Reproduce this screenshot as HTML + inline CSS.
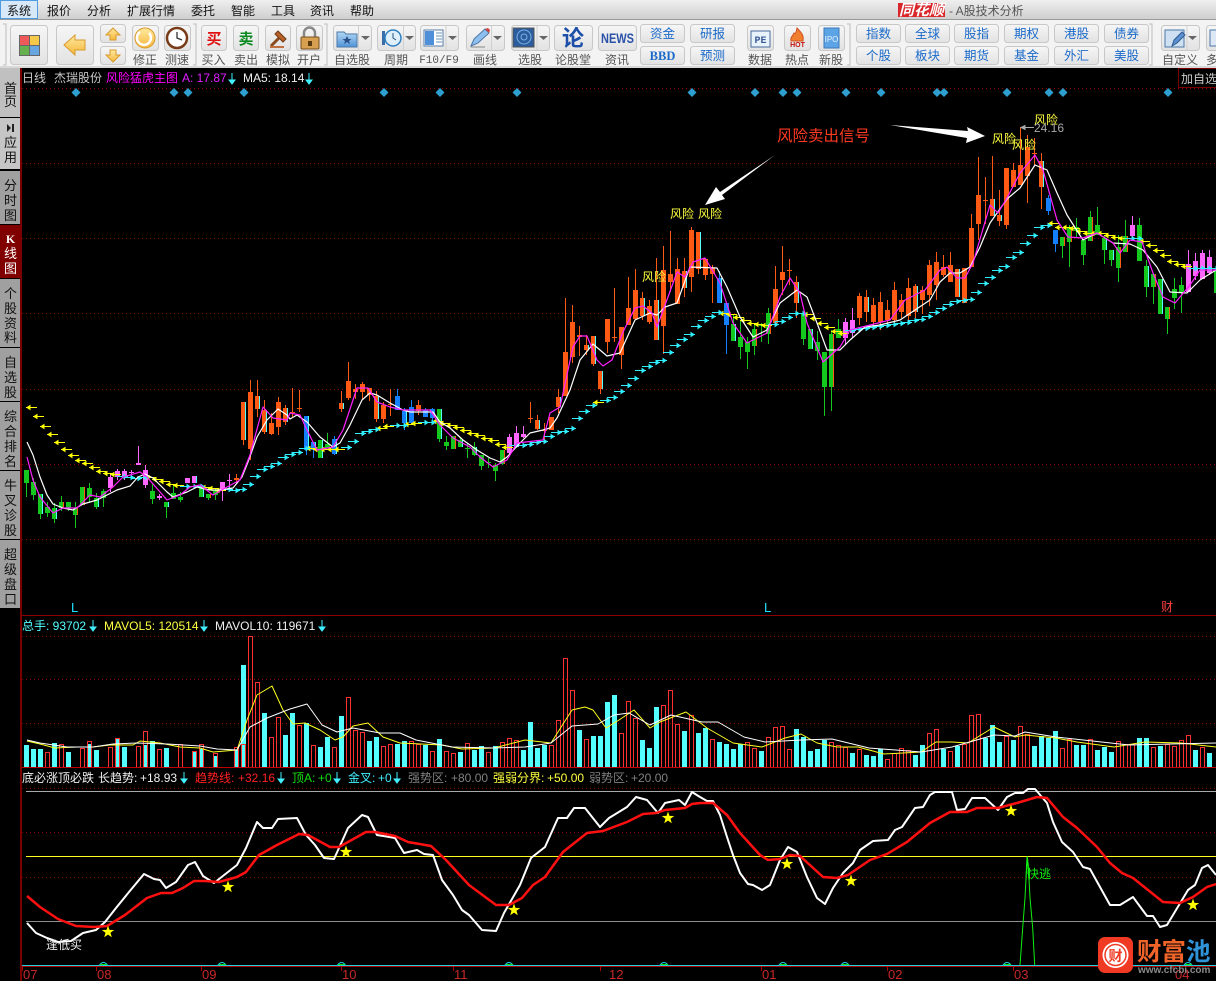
<!DOCTYPE html>
<html><head><meta charset="utf-8"><title>同花顺</title>
<style>
html,body{margin:0;padding:0;background:#000;width:1216px;height:981px;overflow:hidden}
svg{display:block}
text{font-family:"Liberation Sans","WenQuanYi Zen Hei","Noto Sans CJK SC",sans-serif;font-size:12px}
.m{fill:#111}
.l{fill:#555;text-anchor:middle}
.t{fill:#1b6ac9;text-anchor:middle;font-size:12.5px}
.btn{fill:url(#gb);stroke:#c8c8c8;stroke-width:1}
.s{fill:#111;text-anchor:middle;font-size:13px}
.dot{stroke:#8a0000;stroke-width:1;stroke-dasharray:1 3;shape-rendering:crispEdges;fill:none}
.c{fill:none;shape-rendering:crispEdges}
.ln{fill:none;stroke-linejoin:round}
</style></head><body>
<svg xmlns="http://www.w3.org/2000/svg" width="1216" height="981" viewBox="0 0 1216 981">
<defs>
<linearGradient id="gm" x1="0" y1="0" x2="0" y2="1"><stop offset="0" stop-color="#efefef"/><stop offset="1" stop-color="#cfcfcf"/></linearGradient>
<linearGradient id="gb" x1="0" y1="0" x2="0" y2="1"><stop offset="0" stop-color="#f6f6f6"/><stop offset="1" stop-color="#e2e2e2"/></linearGradient>
<linearGradient id="gy" x1="0" y1="0" x2="0" y2="1"><stop offset="0" stop-color="#ffe9a0"/><stop offset="1" stop-color="#f5b73c"/></linearGradient>
<linearGradient id="gf" x1="0" y1="0" x2="0" y2="1"><stop offset="0" stop-color="#b5d8f5"/><stop offset="1" stop-color="#4f93d6"/></linearGradient>
<path id="st" d="M0-6.500L1.500-2.100 6.200-2 2.500.8 3.800 5.300 0 2.600-3.800 5.300-2.500.8-6.200-2-1.500-2.100z" fill="#ff0"/>
<path id="di" d="M0-4.500L4.500 0 0 4.500-4.500 0z" fill="#2f9fd0"/>
<path id="bp" d="M-4 0q4-5 8 0" fill="none" stroke="#20d0e0"/>
</defs>
<rect width="1216" height="981" fill="#000"/>
<!-- menu -->
<rect width="1216" height="19" fill="url(#gm)"/>
<rect y="19" width="1216" height="1" fill="#9a9a9a"/>
<rect y="20" width="1216" height="48" fill="#f3f3f3"/>
<rect y="66" width="1216" height="2" fill="#d8d8d8"/>
<rect x=".5" y=".5" width="37" height="18" fill="#d7e8f8" stroke="#4d9be0"/>
<text class="m" x="7" y="15">系统</text><text class="m" x="47" y="15">报价</text><text class="m" x="87" y="15">分析</text><text class="m" x="127" y="15">扩展行情</text><text class="m" x="191" y="15">委托</text><text class="m" x="231" y="15">智能</text><text class="m" x="271" y="15">工具</text><text class="m" x="310" y="15">资讯</text><text class="m" x="350" y="15">帮助</text>
<rect x="898" y="3" width="47" height="14" fill="#d8262a"/>
<text x="899" y="15" font-weight="bold" font-style="italic" fill="#fff" style="font-size:15px">同花顺</text>
<text x="949" y="15" fill="#555">- A股技术分析</text>
<!-- grips -->
<path d="M3 24h3v41H3M193 24h3v41h-3M324 24h3v41h-3M847 24h3v41h-3M1149 24h3v41h-3" fill="none" stroke="#bcbcbc"/>
<!-- buttons -->
<rect class="btn" x="10.500" y="25.500" width="37" height="39" rx="3"/>
<rect x="19" y="35" width="21" height="21" fill="#666"/><rect x="20" y="36" width="9" height="9" fill="#f0595a"/><rect x="30" y="36" width="9" height="9" fill="#f4c94a"/><rect x="20" y="46" width="9" height="9" fill="#66b050"/><rect x="30" y="46" width="9" height="9" fill="#68a6e2"/>
<rect class="btn" x="56.500" y="25.500" width="37" height="39" rx="3"/>
<path d="M64 45l11-10v5h10v10H75v5z" fill="url(#gy)" stroke="#d89a2c"/>
<rect class="btn" x="100.500" y="24.500" width="25" height="18" rx="3"/><path d="M113 28l7 7h-4v5h-6v-5h-4z" fill="url(#gy)" stroke="#d89a2c"/>
<rect class="btn" x="100.500" y="46.500" width="25" height="18" rx="3"/><path d="M113 62l-7-7h4v-5h6v5h4z" fill="url(#gy)" stroke="#d89a2c"/>
<rect class="btn" x="132.500" y="25.500" width="26" height="25" rx="3"/><circle cx="145" cy="38" r="10" fill="url(#gy)" stroke="#d89a2c"/><path d="M140 32a7 7 0 1 0 9 1" fill="none" stroke="#fff" stroke-width="2.500"/>
<rect class="btn" x="164.500" y="25.500" width="26" height="25" rx="3"/><circle cx="177" cy="38" r="10" fill="#fff" stroke="#7a3c18" stroke-width="2.500"/><path d="M177 32v6l5 2" fill="none" stroke="#333" stroke-width="1.300"/>
<rect class="btn" x="201.500" y="25.500" width="25" height="25" rx="3"/><text x="214" y="44" text-anchor="middle" fill="#e01010" font-weight="bold" style="font-size:15px">买</text>
<rect class="btn" x="233.500" y="25.500" width="25" height="25" rx="3"/><text x="246" y="44" text-anchor="middle" fill="#0a8a20" font-weight="bold" style="font-size:15px">卖</text>
<rect class="btn" x="265.500" y="25.500" width="25" height="25" rx="3"/><path d="M278 31l8 8-3 3-8-8z" fill="#b8622a" stroke="#6e3a14"/><path d="M279 38l-8 8" stroke="#8a4a20" stroke-width="3"/><rect x="270" y="46" width="14" height="2" fill="#c07040"/>
<rect class="btn" x="296.500" y="25.500" width="26" height="25" rx="3"/><path d="M304 38v-5a5.500 5.500 0 0 1 11 0v5" fill="none" stroke="#888" stroke-width="2.500"/><rect x="301" y="37" width="18" height="12" rx="1" fill="#d6a050" stroke="#7a5020"/><rect x="308" y="41" width="4" height="5" fill="#5a3a10"/>
<rect class="btn" x="333.500" y="25.500" width="38" height="25" rx="3"/><path d="M358.500 26v24" stroke="#d0d0d0"/><path d="M337 32h7l2 2h11v13h-20z" fill="url(#gf)" stroke="#4a78a8"/><path d="M347 36l1.500 3h3l-2.500 2 1 3-3-2-3 2 1-3-2.500-2h3z" fill="#2a4f86"/><path d="M361 36h9l-4.500 4z" fill="#666"/>
<rect class="btn" x="377.500" y="25.500" width="38" height="25" rx="3"/><path d="M403.500 26v24" stroke="#d0d0d0"/><rect x="382" y="31" width="3" height="14" fill="#3a6ea8"/><circle cx="393" cy="38" r="8" fill="#dff0fb" stroke="#2e7fc2" stroke-width="1.500"/><path d="M393 33v5l3 2" fill="none" stroke="#2a4f86"/><path d="M405 36h9l-4.500 4z" fill="#666"/>
<rect class="btn" x="420.500" y="25.500" width="38" height="25" rx="3"/><path d="M446 26v24" stroke="#d0d0d0"/><rect x="424" y="30" width="19" height="16" fill="#fff" stroke="#5a7ea8"/><rect x="425" y="31" width="9" height="14" fill="#4d8fd8"/><path d="M436 33h6M436 36h6M436 39h6M436 42h6" stroke="#6a90b8"/><path d="M448 36h9l-4.500 4z" fill="#666"/>
<rect class="btn" x="466.500" y="25.500" width="38" height="25" rx="3"/><path d="M491.500 26v24" stroke="#d0d0d0"/><path d="M471 46l3-7 11-10 4 4-11 10z" fill="#8ec0ef" stroke="#4a78a8"/><path d="M485 29l4 4 1-3-2-2z" fill="#d04040"/><path d="M471 47h14" stroke="#888"/><path d="M493 36h9l-4.500 4z" fill="#666"/>
<rect class="btn" x="511.500" y="25.500" width="38" height="25" rx="3"/><path d="M537 26v24" stroke="#d0d0d0"/><rect x="513" y="28" width="21" height="19" fill="#2b5c9c" stroke="#555"/><circle cx="524" cy="37" r="7" fill="none" stroke="#7bb0e8"/><circle cx="524" cy="37" r="3" fill="none" stroke="#7bb0e8"/><path d="M539 36h9l-4.500 4z" fill="#666"/>
<rect class="btn" x="554.500" y="25.500" width="38" height="25" rx="3"/><text x="573" y="46" text-anchor="middle" fill="#1d4fa8" font-weight="bold" style="font-size:22px">论</text>
<rect class="btn" x="598.500" y="25.500" width="38" height="25" rx="3"/><text x="601" y="43" fill="#2a52a8" font-weight="bold" textLength="33" lengthAdjust="spacingAndGlyphs" style="font-size:14px">NEWS</text>
<rect class="btn" x="640.500" y="24.500" width="44" height="18" rx="3"/><text class="t" x="662.500" y="38">资金</text>
<rect class="btn" x="640.500" y="46.500" width="44" height="18" rx="3"/><text class="t" x="662.500" y="60" style="font-family:'Liberation Serif',serif;font-weight:bold">BBD</text>
<rect class="btn" x="690.500" y="24.500" width="44" height="18" rx="3"/><text class="t" x="712.500" y="38">研报</text>
<rect class="btn" x="690.500" y="46.500" width="44" height="18" rx="3"/><text class="t" x="712.500" y="60">预测</text>
<rect class="btn" x="747.500" y="25.500" width="26" height="25" rx="3"/><rect x="751" y="31" width="19" height="16" fill="#e8f2fb" stroke="#4a6a9a"/><text x="760.500" y="43" text-anchor="middle" fill="#3a5a9a" font-weight="bold" style="font-size:10px;font-family:'Liberation Mono',monospace">PE</text>
<rect class="btn" x="784.500" y="25.500" width="26" height="25" rx="3"/><path d="M797 28c5 5 7 8 6 13h-12c-1-4 2-5 3-8 1 1 2 1 3-5z" fill="#f08030" stroke="#d05020"/><text x="797.500" y="47" text-anchor="middle" fill="#c01010" font-weight="bold" style="font-size:7px">HOT</text>
<rect class="btn" x="818.500" y="25.500" width="26" height="25" rx="3"/><rect x="824" y="28" width="15" height="20" fill="#5da4e6" stroke="#3a78b8"/><text x="831.500" y="42" text-anchor="middle" fill="#e8f4ff" style="font-size:8px">IPO</text>
<rect class="btn" x="856.500" y="24.500" width="44" height="18" rx="3"/><text class="t" x="878.500" y="38">指数</text><rect class="btn" x="856.500" y="46.500" width="44" height="18" rx="3"/><text class="t" x="878.500" y="60">个股</text>
<rect class="btn" x="905.500" y="24.500" width="44" height="18" rx="3"/><text class="t" x="927.500" y="38">全球</text><rect class="btn" x="905.500" y="46.500" width="44" height="18" rx="3"/><text class="t" x="927.500" y="60">板块</text>
<rect class="btn" x="954.500" y="24.500" width="44" height="18" rx="3"/><text class="t" x="976.500" y="38">股指</text><rect class="btn" x="954.500" y="46.500" width="44" height="18" rx="3"/><text class="t" x="976.500" y="60">期货</text>
<rect class="btn" x="1004.500" y="24.500" width="44" height="18" rx="3"/><text class="t" x="1026.500" y="38">期权</text><rect class="btn" x="1004.500" y="46.500" width="44" height="18" rx="3"/><text class="t" x="1026.500" y="60">基金</text>
<rect class="btn" x="1054.500" y="24.500" width="44" height="18" rx="3"/><text class="t" x="1076.500" y="38">港股</text><rect class="btn" x="1054.500" y="46.500" width="44" height="18" rx="3"/><text class="t" x="1076.500" y="60">外汇</text>
<rect class="btn" x="1104.500" y="24.500" width="44" height="18" rx="3"/><text class="t" x="1126.500" y="38">债券</text><rect class="btn" x="1104.500" y="46.500" width="44" height="18" rx="3"/><text class="t" x="1126.500" y="60">美股</text>
<rect class="btn" x="1161.500" y="25.500" width="38" height="25" rx="3"/><path d="M1187 26v24" stroke="#d0d0d0"/><rect x="1165" y="30" width="19" height="17" fill="#cfe0f2" stroke="#4a78a8"/><path d="M1172 46l2-6 8-8 3 3-8 8z" fill="#5a90d0" stroke="#305a90"/><path d="M1188 36h9l-4.500 4z" fill="#666"/>
<rect class="btn" x="1206.500" y="25.500" width="26" height="25" rx="3"/><rect x="1210" y="30" width="14" height="16" fill="#dde8f4" stroke="#4a78a8"/>
<text class="l" x="145" y="64">修正</text><text class="l" x="177" y="64">测速</text><text class="l" x="213.500" y="64">买入</text><text class="l" x="246" y="64">卖出</text><text class="l" x="278" y="64">模拟</text><text class="l" x="309" y="64">开户</text><text class="l" x="352" y="64">自选股</text><text class="l" x="396" y="64">周期</text><text class="l" x="439" y="63" style="font-size:11px;font-family:'Liberation Mono',monospace">F10/F9</text><text class="l" x="485" y="64">画线</text><text class="l" x="530" y="64">选股</text><text class="l" x="573" y="64">论股堂</text><text class="l" x="617" y="64">资讯</text><text class="l" x="760" y="64">数据</text><text class="l" x="797" y="64">热点</text><text class="l" x="831" y="64">新股</text><text class="l" x="1180" y="64">自定义</text><text class="l" x="1212" y="64">多</text>
<!-- sidebar -->
<rect x="0" y="68" width="20" height="49" fill="#c0c0c0"/><rect x="0" y="118" width="20" height="51" fill="#c6c6c6"/>
<rect x="0" y="171" width="20" height="53" fill="#a0a0a0"/><rect x="0" y="225" width="20" height="53" fill="#800000"/>
<rect x="0" y="279" width="20" height="68" fill="#a0a0a0"/><rect x="0" y="348" width="20" height="53" fill="#a0a0a0"/>
<rect x="0" y="402" width="20" height="68" fill="#a0a0a0"/><rect x="0" y="471" width="20" height="68" fill="#a0a0a0"/><rect x="0" y="540" width="20" height="68" fill="#a0a0a0"/>
<rect x="20" y="68" width="2" height="913" fill="#7a0000"/>
<text class="s" x="10.500" y="93">首</text><text class="s" x="10.500" y="106">页</text><path d="M7 124l4 4-4 4zM12 124h2v8h-2z" fill="#222"/><text class="s" x="10.500" y="147">应</text><text class="s" x="10.500" y="162">用</text><text class="s" x="10.500" y="190">分</text><text class="s" x="10.500" y="205">时</text><text class="s" x="10.500" y="220">图</text><text x="10.500" y="243" text-anchor="middle" fill="#fff" font-weight="bold" style="font-family:'Liberation Serif',serif;font-size:12px">K</text><text class="s" style="fill:#fff" x="10.500" y="258">线</text><text class="s" style="fill:#fff" x="10.500" y="273">图</text><text class="s" x="10.500" y="298">个</text><text class="s" x="10.500" y="313">股</text><text class="s" x="10.500" y="328">资</text><text class="s" x="10.500" y="342">料</text><text class="s" x="10.500" y="367">自</text><text class="s" x="10.500" y="382">选</text><text class="s" x="10.500" y="397">股</text><text class="s" x="10.500" y="421">综</text><text class="s" x="10.500" y="436">合</text><text class="s" x="10.500" y="451">排</text><text class="s" x="10.500" y="466">名</text><text class="s" x="10.500" y="490">牛</text><text class="s" x="10.500" y="505">叉</text><text class="s" x="10.500" y="520">诊</text><text class="s" x="10.500" y="535">股</text><text class="s" x="10.500" y="559">超</text><text class="s" x="10.500" y="574">级</text><text class="s" x="10.500" y="589">盘</text><text class="s" x="10.500" y="604">口</text>
<!-- grid -->
<path class="dot" d="M22 88.500H1216M22 163.500H1216M22 238.500H1216M22 313.500H1216M22 389.500H1216M22 464.500H1216M22 539.500H1216M22 636.500H1216M22 679.500H1216M22 723.500H1216M22 788.500H1216M22 832.500H1216M22 877.500H1216"/>
<rect x="22" y="615" width="1194" height="1" fill="#8a0000"/><rect x="22" y="767" width="1194" height="1" fill="#c00000"/>
<!-- diamonds -->
<use href="#di" x="76" y="92.500"/><use href="#di" x="174" y="92.500"/><use href="#di" x="188" y="92.500"/><use href="#di" x="244" y="92.500"/><use href="#di" x="384" y="92.500"/><use href="#di" x="440" y="92.500"/><use href="#di" x="517" y="92.500"/><use href="#di" x="692" y="92.500"/><use href="#di" x="755" y="92.500"/><use href="#di" x="783" y="92.500"/><use href="#di" x="797" y="92.500"/><use href="#di" x="846" y="92.500"/><use href="#di" x="881" y="92.500"/><use href="#di" x="937" y="92.500"/><use href="#di" x="944" y="92.500"/><use href="#di" x="1007" y="92.500"/><use href="#di" x="1049" y="92.500"/><use href="#di" x="1063" y="92.500"/><use href="#di" x="1168" y="92.500"/>
<!-- candles: green -->
<path class="c" stroke="#14c81e" d="M26.500 470V497M33.500 478V500M40.500 494V519M47.500 502V517M54.500 503V523M61.500 496V511M68.500 502V511M75.500 502V528M82.500 487V505M89.500 483V503M96.500 493V509M103.500 489V507M152.500 484V504M166.500 502V518M173.500 486V499M180.500 492V502M201.500 486V497M208.500 494V500M215.500 488V500M320.500 440V458M327.500 433V448M439.500 409V442M446.500 436V450M453.500 436V449M460.500 438V447M467.500 443V458M474.500 442V456M481.500 455V470M488.500 458V468M495.500 463V481M502.500 450V465M733.500 315V341M740.500 320V359M747.500 337V369M754.500 325V355M761.500 323V342M768.500 308V344M803.500 313V345M810.500 329V349M817.500 331V360M824.500 352V416M831.500 330V411M838.500 319V338M1062.500 237V258M1069.500 225V267M1076.500 218V238M1083.500 240V265M1090.500 211V241M1097.500 207V235M1104.500 235V264M1111.500 250V266M1118.500 235V282M1125.500 220V252M1139.500 218V261M1146.500 260V297M1153.500 274V304M1160.500 279V314M1167.500 307V334M1174.500 278V309M1181.500 277V313"/>
<path class="c" stroke="#14c81e" stroke-width="5" d="M26.500 470V483M33.500 482V495M40.500 494V514M47.500 507V513M54.500 508V519M61.500 502V508M68.500 502V508M75.500 508V515M82.500 487V505M89.500 488V497M96.500 498V507M103.500 491V498M152.500 491V499M166.500 502V507M173.500 493V499M180.500 497V500M201.500 488V497M208.500 494V498M215.500 490V495M320.500 440V458M327.500 444V448M439.500 409V439M446.500 442V446M453.500 436V449M460.500 440V447M467.500 448V449M474.500 447V455M481.500 455V466M488.500 462V463M495.500 465V471M502.500 450V464M733.500 324V341M740.500 337V347M747.500 342V352M754.500 329V346M761.500 325V326M768.500 313V334M803.500 313V339M810.500 329V349M817.500 342V351M824.500 352V387M831.500 334V387M838.500 329V338M1062.500 237V246M1069.500 227V242M1076.500 227V231M1083.500 240V255M1090.500 217V241M1097.500 225V235M1104.500 238V250M1111.500 250V260M1118.500 247V268M1125.500 236V252M1139.500 225V261M1146.500 266V287M1153.500 274V287M1160.500 279V314M1167.500 307V319M1174.500 289V298M1181.500 285V292M1216.500 270V293"/>
<!-- orange -->
<path class="c" stroke="#ff5a14" d="M236.500 474V484M243.500 402V445M250.500 380V460M257.500 380V417M264.500 400V434M271.500 413V435M278.500 397V435M285.500 405V425M292.500 388V417M299.500 390V412M341.500 391V412M348.500 362V400M355.500 384V399M362.500 382V400M369.500 388V401M376.500 391V422M383.500 402V423M390.500 389V416M418.500 400V415M530.500 402V423M537.500 415V430M544.500 423V440M551.500 417V430M558.500 389V413M565.500 298V396M572.500 305V363M579.500 326V356M586.500 335V355M593.500 336V366M600.500 371V394M607.500 319V353M614.500 288V342M621.500 327V369M628.500 277V325M635.500 269V320M642.500 292V320M649.500 300V324M656.500 258V340M663.500 246V354M670.500 231V292M677.500 258V304M684.500 258V297M691.500 227V292M698.500 232V274M705.500 259V280M712.500 265V303M775.500 266V323M782.500 246V295M789.500 259V285M796.500 276V318M859.500 293V325M866.500 290V322M873.500 298V328M880.500 292V330M887.500 300V326M894.500 282V324M901.500 294V318M908.500 278V320M915.500 284V318M922.500 286V314M929.500 260V306M936.500 252V300M943.500 255V277M950.500 252V282M957.500 269V297M964.500 268V303M971.500 214V267M978.500 157V240M985.500 177V224M992.500 156V216M999.500 190V226M1006.500 168V229M1013.500 163V187M1020.500 127V185M1027.500 135V203M1034.500 138V165M1041.500 153V209"/>
<path class="c" stroke="#ff5a14" stroke-width="5" d="M236.500 478V480M243.500 402V440M250.500 392V449M257.500 396V409M264.500 410V432M271.500 423V434M278.500 402V427M285.500 408V422M292.500 412V413M299.500 408V409M341.500 403V409M348.500 381V398M355.500 389V392M362.500 384V392M369.500 388V395M376.500 396V419M383.500 405V419M390.500 404V405M418.500 405V411M530.500 418V419M537.500 420V429M544.500 430V431M551.500 417V430M558.500 397V407M565.500 352V396M572.500 322V357M579.500 335V337M586.500 345V350M593.500 336V364M600.500 371V389M607.500 319V342M614.500 337V338M621.500 327V355M628.500 308V325M635.500 290V319M642.500 298V316M649.500 306V322M656.500 300V340M663.500 270V326M670.500 274V282M677.500 269V304M684.500 271V288M691.500 230V277M698.500 232V269M705.500 259V275M712.500 268V274M775.500 289V323M782.500 272V280M789.500 270V271M796.500 282V303M859.500 296V318M866.500 297V312M873.500 305V322M880.500 302V322M887.500 310V320M894.500 290V320M901.500 300V312M908.500 288V316M915.500 286V312M922.500 290V300M929.500 265V295M936.500 262V285M943.500 267V275M950.500 265V282M957.500 269V297M964.500 268V303M971.500 228V267M978.500 195V224M985.500 200V201M992.500 199V216M999.500 215V221M1006.500 168V225M1013.500 170V187M1020.500 165V185M1027.500 147V176M1034.500 153V154M1041.500 161V187"/>
<!-- pink -->
<path class="c" stroke="#ff66ff" d="M110.500 473V492M117.500 469V480M124.500 469V480M131.500 470V478M138.500 446V465M145.500 465V488M159.500 494V500M187.500 478V483M194.500 476V483M222.500 482V501M229.500 474V491M509.500 434V454M516.500 426V447M523.500 426V438M845.500 318V345M852.500 308V338M1132.500 216V240M1188.500 250V292M1195.500 253V280M1202.500 250V279M1209.500 250V275"/>
<path class="c" stroke="#ff66ff" stroke-width="5" d="M110.500 477V488M117.500 471V477M124.500 471V476M131.500 472V473M138.500 463V465M145.500 470V485M159.500 496V498M187.500 478V483M194.500 476V483M222.500 482V491M229.500 480V481M509.500 437V453M516.500 433V447M523.500 434V437M845.500 322V338M852.500 320V333M1132.500 225V236M1188.500 264V292M1195.500 261V276M1202.500 253V279M1209.500 257V273"/>
<!-- blue -->
<path class="c" stroke="#1480ff" d="M306.500 416V455M313.500 442V458M334.500 436V455M397.500 389V410M404.500 408V430M411.500 400V423M425.500 408V417M432.500 408V423M719.500 271V303M726.500 303V354M1048.500 195V215M1055.500 230V252"/>
<path class="c" stroke="#1480ff" stroke-width="5" d="M306.500 416V450M313.500 442V450M334.500 439V454M397.500 396V410M404.500 411V423M411.500 407V423M425.500 410V417M432.500 409V418M719.500 278V303M726.500 303V325M1048.500 198V211M1055.500 230V244"/>
<!-- edges -->
<path class="c" stroke="#54ffff" d="M42.500 494V514M56.500 508V519M98.500 498V507M168.500 502V507M196.500 476V483M203.500 488V497M245.500 402V440M259.500 396V409M266.500 410V432M287.500 408V422M308.500 416V450M315.500 442V450M322.500 440V458M336.500 439V454M343.500 403V409M378.500 396V419M406.500 411V423M441.500 409V439M462.500 440V447M476.500 447V455M539.500 420V429M560.500 397V407M588.500 345V350M595.500 336V364M602.500 371V389M644.500 298V316M658.500 300V340M686.500 271V288M700.500 232V269M721.500 278V303M735.500 324V341M798.500 282V303M812.500 329V349M868.500 297V312M917.500 286V312M959.500 269V297M994.500 199V216M1001.500 215V221M1043.500 161V187M1106.500 238V250M1113.500 250V260M1148.500 266V287M1162.500 279V314"/>
<path class="c" stroke="#ff5a14" d="M63.500 502V508M77.500 508V515M84.500 487V505M210.500 494V498M455.500 436V449M504.500 450V464M756.500 329V346M770.500 313V334M833.500 334V387M1064.500 237V246M1071.500 227V242M1092.500 217V241M1120.500 247V268M1127.500 236V252M1155.500 274V287M1169.500 307V319"/>
<!-- stair arrows yellow -->
<path fill="#ff0" stroke="#ff0" d="M26 407.500h11m-10 0l3-2v4zM33 416.500h11m-10 0l3-2v4zM40 426.500h11m-10 0l3-2v4zM47 434.500h11m-10 0l3-2v4zM54 442.500h11m-10 0l3-2v4zM61 449.500h11m-10 0l3-2v4zM68 455.500h11m-10 0l3-2v4zM75 460.500h11m-10 0l3-2v4zM82 463.500h11m-10 0l3-2v4zM89 467.500h11m-10 0l3-2v4zM96 471.500h11m-10 0l3-2v4zM103 473.500h11m-10 0l3-2v4zM110 474.500h11m-10 0l3-2v4zM145 477.500h11m-10 0l3-2v4zM152 479.500h11m-10 0l3-2v4zM159 481.500h11m-10 0l3-2v4zM166 484.500h11m-10 0l3-2v4zM173 485.500h11m-10 0l3-2v4zM201 487.500h11m-10 0l3-2v4zM208 488.500h11m-10 0l3-2v4zM215 490.500h11m-10 0l3-2v4zM306 448.500h11m-10 0l3-2v4zM313 449.500h11m-10 0l3-2v4zM320 449.500h11m-10 0l3-2v4zM327 449.500h11m-10 0l3-2v4zM334 449.500h11m-10 0l3-2v4zM376 428.500h11m-10 0l3-2v4zM383 426.500h11m-10 0l3-2v4zM404 424.500h11m-10 0l3-2v4zM411 423.500h11m-10 0l3-2v4zM432 421.500h11m-10 0l3-2v4zM439 423.500h11m-10 0l3-2v4zM446 425.500h11m-10 0l3-2v4zM453 427.500h11m-10 0l3-2v4zM460 430.500h11m-10 0l3-2v4zM467 433.500h11m-10 0l3-2v4zM474 435.500h11m-10 0l3-2v4zM481 438.500h11m-10 0l3-2v4zM488 440.500h11m-10 0l3-2v4zM495 444.500h11m-10 0l3-2v4zM502 447.500h11m-10 0l3-2v4zM593 402.500h11m-10 0l3-2v4zM719 313.500h11m-10 0l3-2v4zM726 314.500h11m-10 0l3-2v4zM733 317.500h11m-10 0l3-2v4zM740 320.500h11m-10 0l3-2v4zM747 323.500h11m-10 0l3-2v4zM754 324.500h11m-10 0l3-2v4zM761 325.500h11m-10 0l3-2v4zM803 314.500h11m-10 0l3-2v4zM810 318.500h11m-10 0l3-2v4zM817 323.500h11m-10 0l3-2v4zM824 327.500h11m-10 0l3-2v4zM831 331.500h11m-10 0l3-2v4zM838 333.500h11m-10 0l3-2v4zM1048 223.500h11m-10 0l3-2v4zM1055 227.500h11m-10 0l3-2v4zM1062 227.500h11m-10 0l3-2v4zM1069 228.500h11m-10 0l3-2v4zM1076 231.500h11m-10 0l3-2v4zM1083 233.500h11m-10 0l3-2v4zM1090 233.500h11m-10 0l3-2v4zM1097 233.500h11m-10 0l3-2v4zM1104 235.500h11m-10 0l3-2v4zM1111 237.500h11m-10 0l3-2v4zM1118 238.500h11m-10 0l3-2v4zM1139 241.500h11m-10 0l3-2v4zM1146 245.500h11m-10 0l3-2v4zM1153 250.500h11m-10 0l3-2v4zM1160 255.500h11m-10 0l3-2v4zM1167 261.500h11m-10 0l3-2v4zM1174 264.500h11m-10 0l3-2v4zM1181 266.500h11m-10 0l3-2v4z"/>
<!-- stair arrows cyan -->
<path fill="#30f0ff" stroke="#30f0ff" d="M117 476.500h11m-1 0l-3-2v4zM124 477.500h11m-1 0l-3-2v4zM131 478.500h11m-1 0l-3-2v4zM138 477.500h11m-1 0l-3-2v4zM180 486.500h11m-1 0l-3-2v4zM187 486.500h11m-1 0l-3-2v4zM194 486.500h11m-1 0l-3-2v4zM222 489.500h11m-1 0l-3-2v4zM229 490.500h11m-1 0l-3-2v4zM236 489.500h11m-1 0l-3-2v4zM243 484.500h11m-1 0l-3-2v4zM250 476.500h11m-1 0l-3-2v4zM257 469.500h11m-1 0l-3-2v4zM264 466.500h11m-1 0l-3-2v4zM271 463.500h11m-1 0l-3-2v4zM278 457.500h11m-1 0l-3-2v4zM285 454.500h11m-1 0l-3-2v4zM292 452.500h11m-1 0l-3-2v4zM299 448.500h11m-1 0l-3-2v4zM341 447.500h11m-1 0l-3-2v4zM348 441.500h11m-1 0l-3-2v4zM355 433.500h11m-1 0l-3-2v4zM362 431.500h11m-1 0l-3-2v4zM369 429.500h11m-1 0l-3-2v4zM390 425.500h11m-1 0l-3-2v4zM397 425.500h11m-1 0l-3-2v4zM418 422.500h11m-1 0l-3-2v4zM425 422.500h11m-1 0l-3-2v4zM509 445.500h11m-1 0l-3-2v4zM516 445.500h11m-1 0l-3-2v4zM523 444.500h11m-1 0l-3-2v4zM530 442.500h11m-1 0l-3-2v4zM537 441.500h11m-1 0l-3-2v4zM544 436.500h11m-1 0l-3-2v4zM551 432.500h11m-1 0l-3-2v4zM558 431.500h11m-1 0l-3-2v4zM565 428.500h11m-1 0l-3-2v4zM572 418.500h11m-1 0l-3-2v4zM579 411.500h11m-1 0l-3-2v4zM586 405.500h11m-1 0l-3-2v4zM600 400.500h11m-1 0l-3-2v4zM607 397.500h11m-1 0l-3-2v4zM614 391.500h11m-1 0l-3-2v4zM621 385.500h11m-1 0l-3-2v4zM628 378.500h11m-1 0l-3-2v4zM635 370.500h11m-1 0l-3-2v4zM642 366.500h11m-1 0l-3-2v4zM649 362.500h11m-1 0l-3-2v4zM656 360.500h11m-1 0l-3-2v4zM663 352.500h11m-1 0l-3-2v4zM670 345.500h11m-1 0l-3-2v4zM677 339.500h11m-1 0l-3-2v4zM684 334.500h11m-1 0l-3-2v4zM691 326.500h11m-1 0l-3-2v4zM698 320.500h11m-1 0l-3-2v4zM705 316.500h11m-1 0l-3-2v4zM712 312.500h11m-1 0l-3-2v4zM768 324.500h11m-1 0l-3-2v4zM775 321.500h11m-1 0l-3-2v4zM782 317.500h11m-1 0l-3-2v4zM789 313.500h11m-1 0l-3-2v4zM796 313.500h11m-1 0l-3-2v4zM845 330.500h11m-1 0l-3-2v4zM852 329.500h11m-1 0l-3-2v4zM859 328.500h11m-1 0l-3-2v4zM866 327.500h11m-1 0l-3-2v4zM873 326.500h11m-1 0l-3-2v4zM880 325.500h11m-1 0l-3-2v4zM887 324.500h11m-1 0l-3-2v4zM894 323.500h11m-1 0l-3-2v4zM901 322.500h11m-1 0l-3-2v4zM908 320.500h11m-1 0l-3-2v4zM915 319.500h11m-1 0l-3-2v4zM922 316.500h11m-1 0l-3-2v4zM929 312.500h11m-1 0l-3-2v4zM936 308.500h11m-1 0l-3-2v4zM943 304.500h11m-1 0l-3-2v4zM950 301.500h11m-1 0l-3-2v4zM957 300.500h11m-1 0l-3-2v4zM964 299.500h11m-1 0l-3-2v4zM971 292.500h11m-1 0l-3-2v4zM978 283.500h11m-1 0l-3-2v4zM985 277.500h11m-1 0l-3-2v4zM992 270.500h11m-1 0l-3-2v4zM999 266.500h11m-1 0l-3-2v4zM1006 257.500h11m-1 0l-3-2v4zM1013 252.500h11m-1 0l-3-2v4zM1020 243.500h11m-1 0l-3-2v4zM1027 235.500h11m-1 0l-3-2v4zM1034 227.500h11m-1 0l-3-2v4zM1041 225.500h11m-1 0l-3-2v4zM1125 238.500h11m-1 0l-3-2v4zM1132 238.500h11m-1 0l-3-2v4zM1188 268.500h11m-1 0l-3-2v4zM1195 268.500h11m-1 0l-3-2v4zM1202 268.500h11m-1 0l-3-2v4zM1209 268.500h11m-1 0l-3-2v4z"/>
<!-- MA -->
<polyline class="ln" stroke="#fff" stroke-width="1.200" points="27,442 33,455 40,477 47,495 53,504 63,508 73,510 83,504 97,500 107,495 117,490 130,486 138,477 145,474 153,478 167,492 173,497 187,492 197,487 210,490 220,490 233,488 242,477 248,462 257,437 267,420 278,409 287,415 290,419 297,415 307,422 320,437 333,447 340,443 350,425 362,400 370,393 377,395 390,403 403,410 410,412 433,412 440,422 450,428 463,440 477,450 490,458 500,462 507,457 520,443 530,433 543,430 550,428 557,418 570,390 580,360 593,344 607,356 620,353 635,320 650,313 657,315 665,307 677,303 690,267 717,268 727,287 740,317 753,337 767,330 780,303 797,290 807,297 817,323 827,350 840,350 850,340 865,327 880,325 900,320 915,310 930,300 940,282 950,273 960,273 970,267 980,247 990,223 1007,199 1020,188 1035,165 1047,170 1057,193 1067,215 1083,240 1097,233 1113,243 1130,244 1143,250 1157,267 1170,292 1187,293 1200,280 1216,270"/>
<polyline class="ln" stroke="#ff20ff" stroke-width="1.200" points="27,457 33,480 40,497 53,513 63,508 77,508 90,495 100,497 113,487 123,477 140,472 147,477 167,500 180,495 190,487 200,485 213,495 227,487 240,480 250,455 263,407 273,418 287,420 290,413 300,415 307,430 317,450 333,447 343,430 357,388 368,388 377,402 390,407 403,410 430,410 440,425 453,438 470,447 480,457 493,467 507,460 517,443 543,440 550,413 560,407 573,347 580,336 587,336 597,360 603,366 612,360 623,332 635,308 643,306 652,313 657,327 668,297 677,272 685,277 693,262 705,258 720,283 733,323 747,343 767,333 780,297 790,278 800,293 807,323 823,362 840,347 850,330 870,325 890,320 905,300 925,290 940,270 947,267 957,278 965,278 973,263 990,205 998,213 1007,198 1020,173 1035,155 1043,170 1057,220 1068,237 1083,238 1097,233 1113,243 1120,253 1130,240 1142,242 1153,273 1163,297 1175,303 1190,285 1200,270 1216,270"/>
<!-- volume cyan -->
<path class="c" stroke="#54ffff" stroke-width="5" d="M26.500 745V767M33.500 749V767M40.500 749V767M54.500 743V767M68.500 752V767M89.500 744V767M96.500 750V767M117.500 739V767M124.500 747V767M145.500 745V767M152.500 741V767M166.500 748V767M194.500 752V767M201.500 749V767M215.500 756V767M236.500 750V767M243.500 665V767M264.500 713V767M285.500 735V767M292.500 713V767M306.500 723V767M320.500 747V767M327.500 737V767M341.500 716V767M369.500 741V767M376.500 737V767M397.500 744V767M404.500 741V767M425.500 745V767M439.500 739V767M460.500 752V767M474.500 750V767M481.500 746V767M495.500 746V767M523.500 750V767M530.500 722V767M537.500 748V767M544.500 745V767M579.500 730V767M593.500 736V767M600.500 736V767M607.500 702V767M614.500 695V767M642.500 740V767M649.500 748V767M656.500 707V767M684.500 731V767M698.500 733V767M705.500 728V767M719.500 742V767M726.500 744V767M733.500 749V767M740.500 744V767M761.500 751V767M796.500 729V767M803.500 737V767M810.500 751V767M817.500 749V767M824.500 740V767M852.500 753V767M866.500 755V767M873.500 756V767M880.500 749V767M915.500 755V767M922.500 745V767M943.500 749V767M957.500 746V767M985.500 738V767M992.500 725V767M999.500 742V767M1013.500 740V767M1034.500 746V767M1041.500 736V767M1048.500 738V767M1055.500 731V767M1076.500 745V767M1083.500 745V767M1097.500 750V767M1104.500 747V767M1111.500 752V767M1139.500 738V767M1146.500 738V767M1160.500 746V767M1195.500 750V767M1209.500 753V767"/>
<!-- volume red -->
<path class="c" stroke="#ff3030" d="M45.500 767V752.500h4V767M59.500 767V744.500h4V767M80.500 767V748.500h4V767M87.500 767V741.500h4V767M108.500 767V747.500h4V767M115.500 767V738.500h4V767M136.500 767V746.500h4V767M143.500 767V731.500h4V767M157.500 767V749.500h4V767M178.500 767V744.500h4V767M192.500 767V751.500h4V767M199.500 767V744.500h4V767M213.500 767V753.500h4V767M234.500 767V747.500h4V767M241.500 767V744.500h4V767M248.500 767V636.500h4V767M255.500 767V682.500h4V767M269.500 767V737.500h4V767M276.500 767V717.500h4V767M297.500 767V725.500h4V767M311.500 767V745.500h4V767M332.500 767V747.500h4V767M346.500 767V697.500h4V767M353.500 767V730.500h4V767M360.500 767V732.500h4V767M381.500 767V746.500h4V767M388.500 767V744.500h4V767M409.500 767V741.500h4V767M416.500 767V744.500h4V767M430.500 767V751.500h4V767M444.500 767V751.500h4V767M451.500 767V753.500h4V767M465.500 767V743.500h4V767M486.500 767V752.500h4V767M500.500 767V742.500h4V767M507.500 767V738.500h4V767M514.500 767V740.500h4V767M549.500 767V745.500h4V767M556.500 767V720.500h4V767M563.500 767V658.500h4V767M570.500 767V690.500h4V767M584.500 767V739.500h4V767M619.500 767V733.500h4V767M626.500 767V701.500h4V767M633.500 767V718.500h4V767M661.500 767V705.500h4V767M668.500 767V690.500h4V767M675.500 767V724.500h4V767M689.500 767V715.500h4V767M710.500 767V739.500h4V767M745.500 767V742.500h4V767M752.500 767V748.500h4V767M766.500 767V737.500h4V767M773.500 767V727.500h4V767M780.500 767V726.500h4V767M787.500 767V749.500h4V767M829.500 767V742.500h4V767M836.500 767V745.500h4V767M843.500 767V747.500h4V767M857.500 767V749.500h4V767M885.500 767V759.500h4V767M892.500 767V753.500h4V767M899.500 767V748.500h4V767M906.500 767V750.500h4V767M927.500 767V733.500h4V767M934.500 767V729.500h4V767M948.500 767V751.500h4V767M962.500 767V744.500h4V767M969.500 767V715.500h4V767M976.500 767V714.500h4V767M1004.500 767V736.500h4V767M1018.500 767V726.500h4V767M1025.500 767V734.500h4V767M1060.500 767V748.500h4V767M1067.500 767V739.500h4V767M1088.500 767V739.500h4V767M1116.500 767V741.500h4V767M1123.500 767V744.500h4V767M1130.500 767V744.500h4V767M1151.500 767V747.500h4V767M1165.500 767V744.500h4V767M1172.500 767V746.500h4V767M1179.500 767V740.500h4V767M1186.500 767V735.500h4V767M1200.500 767V747.500h4V767"/>
<polyline class="ln" stroke="#ffff20" points="27,741 40,744 55,748 77,747 93,747 110,745 133,745 140,741 160,743 180,747 200,748 213,752 237,750 247,720 257,695 272,686 283,710 293,724 305,723 320,730 335,740 343,737 353,726 368,723 383,737 400,743 442,745 462,749 494,748 525,740 551,743 572,710 585,707 593,710 606,728 619,720 634,710 650,728 660,722 686,712 707,728 733,743 762,747 785,738 801,734 817,743 837,747 858,747 884,754 921,752 936,742 952,742 968,743 994,727 1015,737 1025,735 1056,738 1077,742 1114,747 1145,742 1181,743 1216,747"/>
<polyline class="ln" stroke="#fff" points="27,740 40,743 67,747 93,747 113,744 137,743 167,744 200,746 217,749 237,750 250,727 267,718 290,709 307,704 322,725 337,732 353,728 380,733 400,733 416,740 452,747 494,748 525,747 551,743 572,726 598,724 614,715 629,713 650,725 671,715 702,722 718,722 744,737 765,742 801,740 832,739 869,748 921,752 952,747 994,735 1015,736 1025,732 1056,737 1129,745 1216,743"/>
<!-- bottom panel -->
<rect x="26" y="791" width="1190" height="1" fill="#a8a8a8"/><rect x="26" y="856" width="1190" height="1" fill="#ffff20"/><rect x="26" y="921" width="1190" height="1" fill="#909090"/><rect x="22" y="965" width="1194" height="1" fill="#20d0e0"/><rect x="22" y="966" width="1194" height="1" fill="#b00000"/>
<path class="c" stroke="#b00000" d="M22.500 967v4M96.500 967v4M201.500 967v4M341.500 967v4M453.500 967v4M600.500 967v4M761.500 967v4M887.500 967v4M1013.500 967v4M1173.500 967v4"/>
<use href="#bp" x="103.500" y="965"/><use href="#bp" x="222" y="965"/><use href="#bp" x="341.500" y="965"/><use href="#bp" x="509" y="965"/><use href="#bp" x="664" y="965"/><use href="#bp" x="783" y="965"/><use href="#bp" x="845" y="965"/><use href="#bp" x="1007" y="965"/><use href="#bp" x="1188" y="965"/>
<path class="c" stroke="#10e010" d="M100 964.500h7M219 964.500h7M338 964.500h7M506 964.500h7M661 964.500h7M780 964.500h7M842 964.500h7M1004 964.500h7M1185 964.500h7"/>
<polyline class="ln" stroke="#10f010" points="1020,965 1022.700,928 1025,898 1026.700,865 1027.300,857 1028.300,865 1030,898 1032.700,928 1034.700,965"/>
<polyline class="ln" stroke="#10f010" points="1026,880 1027,857 1029,880"/>
<polyline class="ln" stroke="#fff" stroke-width="2" points="27,923 36,933 47,938 58,942 71,941 83,933 96,930 105,922 116,908 129,892 144,874 154,879 160,880 166,888 176,882 188,865 195,862 203,876 214,883 228,872 237,865 246,848 257,822 263,828 272,828 278,819 297,818 306,835 315,845 324,858 334,859 339,848 348,828 362,815 368,817 377,835 395,838 404,853 417,850 424,854 433,855 442,880 453,895 462,910 469,915 482,930 496,931 504,913 520,885 531,858 545,847 558,818 567,818 574,808 585,808 600,827 609,818 627,807 636,797 647,800 658,813 665,803 679,800 685,805 692,792 700,797 707,801 713,801 720,815 727,837 733,855 740,873 748,884 753,885 762,890 770,885 780,860 788,847 797,852 807,877 817,898 825,904 833,888 843,873 853,863 860,850 873,841 888,840 895,830 902,827 915,808 923,807 930,795 935,792 952,792 957,810 965,809 972,798 985,798 998,810 1007,797 1015,793 1023,793 1028,789 1035,789 1047,803 1053,822 1062,842 1073,852 1083,867 1090,869 1100,887 1110,905 1120,905 1133,897 1147,916 1153,916 1160,927 1167,925 1188,890 1195,885 1202,868 1208,865 1216,875"/>
<polyline class="ln" stroke="#ff1010" stroke-width="2.500" points="27,896 40,907 58,919 76,926 94,927 107,926 125,915 147,898 161,893 172,893 183,888 194,881 205,881 219,882 237,877 246,872 259,855 277,845 299,834 308,835 330,847 339,847 366,832 375,832 395,836 408,842 431,846 446,860 469,885 496,905 509,905 522,898 533,885 545,877 563,852 587,833 603,831 627,822 643,814 656,813 665,810 685,808 692,804 700,803 713,803 727,815 740,833 760,855 768,860 780,859 790,855 800,856 823,877 837,878 848,875 870,860 887,854 907,842 930,823 950,812 967,812 977,808 998,808 1017,803 1037,797 1047,798 1063,817 1077,828 1097,847 1110,863 1122,873 1133,878 1163,902 1180,903 1193,897 1207,887 1216,884"/>
<use href="#st" x="108" y="932"/><use href="#st" x="228" y="887"/><use href="#st" x="346" y="852"/><use href="#st" x="514" y="910"/><use href="#st" x="668" y="818"/><use href="#st" x="787" y="864"/><use href="#st" x="851" y="881"/><use href="#st" x="1011" y="811"/><use href="#st" x="1193" y="905"/>
<!-- header down arrows -->
<path fill="#40f0ff" stroke="#40f0ff" d="M232 73v8m-3-1l3 4 3-4zM309 73v8m-3-1l3 4 3-4zM93 620v8m-3-1l3 4 3-4zM204 620v8m-3-1l3 4 3-4zM322 620v8m-3-1l3 4 3-4zM184 772v8m-3-1l3 4 3-4zM281 772v8m-3-1l3 4 3-4zM337 772v8m-3-1l3 4 3-4zM397 772v8m-3-1l3 4 3-4z"/>
<!-- headers -->
<text x="22" y="82" fill="#c8c8c8">日线</text><text x="54" y="82" fill="#c8c8c8">杰瑞股份</text><text x="106" y="82" fill="#f0f">风险猛虎主图</text><text x="182" y="82" fill="#e020ff">A: 17.87</text><text x="243" y="82" fill="#f0f0f0">MA5: 18.14</text>
<rect x="1178.500" y="68.500" width="42" height="19" fill="#000" stroke="#7a0000"/><text x="1181" y="83" fill="#ccc">加自选</text>
<text x="22" y="630" fill="#54ffff">总手: 93702</text><text x="104" y="630" fill="#ffff40">MAVOL5: 120514</text><text x="215" y="630" fill="#f0f0f0">MAVOL10: 119671</text>
<text x="22" y="782" fill="#f0f0f0">底必涨顶必跌</text><text x="98" y="782" fill="#f0f0f0">长趋势:</text><text x="140" y="782" fill="#f0f0f0">+18.93</text><text x="195" y="782" fill="#ff2020">趋势线:</text><text x="238" y="782" fill="#ff2020">+32.16</text><text x="292" y="782" fill="#10e010">顶A:</text><text x="318" y="782" fill="#10e010">+0</text><text x="348" y="782" fill="#40f0ff">金叉:</text><text x="378" y="782" fill="#40f0ff">+0</text><text x="408" y="782" fill="#808080">强势区:</text><text x="451" y="782" fill="#808080">+80.00</text><text x="493" y="782" fill="#ffff40">强弱分界:</text><text x="547" y="782" fill="#ffff40">+50.00</text><text x="589" y="782" fill="#808080">弱势区:</text><text x="631" y="782" fill="#808080">+20.00</text>
<!-- annotations -->
<text x="777" y="141" fill="#ff3a20" style="font-size:15.500px">风险卖出信号</text>
<polygon points="775,155 720,192 716,187 705,205 725,199 722,195" fill="#fff"/>
<polygon points="890,125 968,131 967,127 985,136 966,143 967,138" fill="#fff"/>
<text x="670" y="218" fill="#ffff40">风险</text><text x="698" y="218" fill="#ffff40">风险</text><text x="642" y="281" fill="#ffff40">风险</text><text x="992" y="143" fill="#ffff40">风险</text><text x="1012" y="149" fill="#ffff40">风险</text><text x="1034" y="124" fill="#ffff40">风险</text>
<path d="M1021 127.500h13M1021 127.500l4-2v4z" stroke="#aaa" fill="#aaa"/><text x="1034" y="132" fill="#a8a8a8">24.16</text>
<text x="71" y="612" fill="#20e0ff" style="font-size:13px">L</text><text x="764" y="612" fill="#20e0ff" style="font-size:13px">L</text>
<text x="1161" y="611" fill="#ff4040">财</text>
<text x="46" y="949" fill="#f0f0f0">逢低买</text>
<text x="1027" y="878" fill="#10f010">快逃</text>
<text x="23" y="979" fill="#c82828" style="font-size:13px">07</text><text x="97" y="979" fill="#c82828" style="font-size:13px">08</text><text x="202" y="979" fill="#c82828" style="font-size:13px">09</text><text x="342" y="979" fill="#c82828" style="font-size:13px">10</text><text x="454" y="979" fill="#c82828" style="font-size:13px">11</text><text x="609" y="979" fill="#c82828" style="font-size:13px">12</text><text x="762" y="979" fill="#c82828" style="font-size:13px">01</text><text x="888" y="979" fill="#c82828" style="font-size:13px">02</text><text x="1014" y="979" fill="#c82828" style="font-size:13px">03</text><text x="1175" y="979" fill="#c82828" style="font-size:13px">04</text>
<!-- watermark -->
<rect x="1098" y="937" width="35" height="36" rx="7" fill="#f03a24"/><circle cx="1115.500" cy="955" r="13" fill="#fff"/><circle cx="1115.500" cy="955" r="10.500" fill="none" stroke="#f03a24" stroke-width="1.500"/><text x="1115.500" y="961" text-anchor="middle" fill="#f03a24" font-weight="bold" style="font-size:14px">财</text>
<text x="1137" y="960" fill="#f0642a" font-weight="bold" style="font-size:24.500px">财富</text><text x="1186" y="960" fill="#2f93d8" font-weight="bold" style="font-size:24.500px">池</text>
<text x="1138" y="973" fill="#8a8a8a" font-weight="bold" style="font-size:10px">www.cfcbi.com</text>
</svg>
</body></html>
